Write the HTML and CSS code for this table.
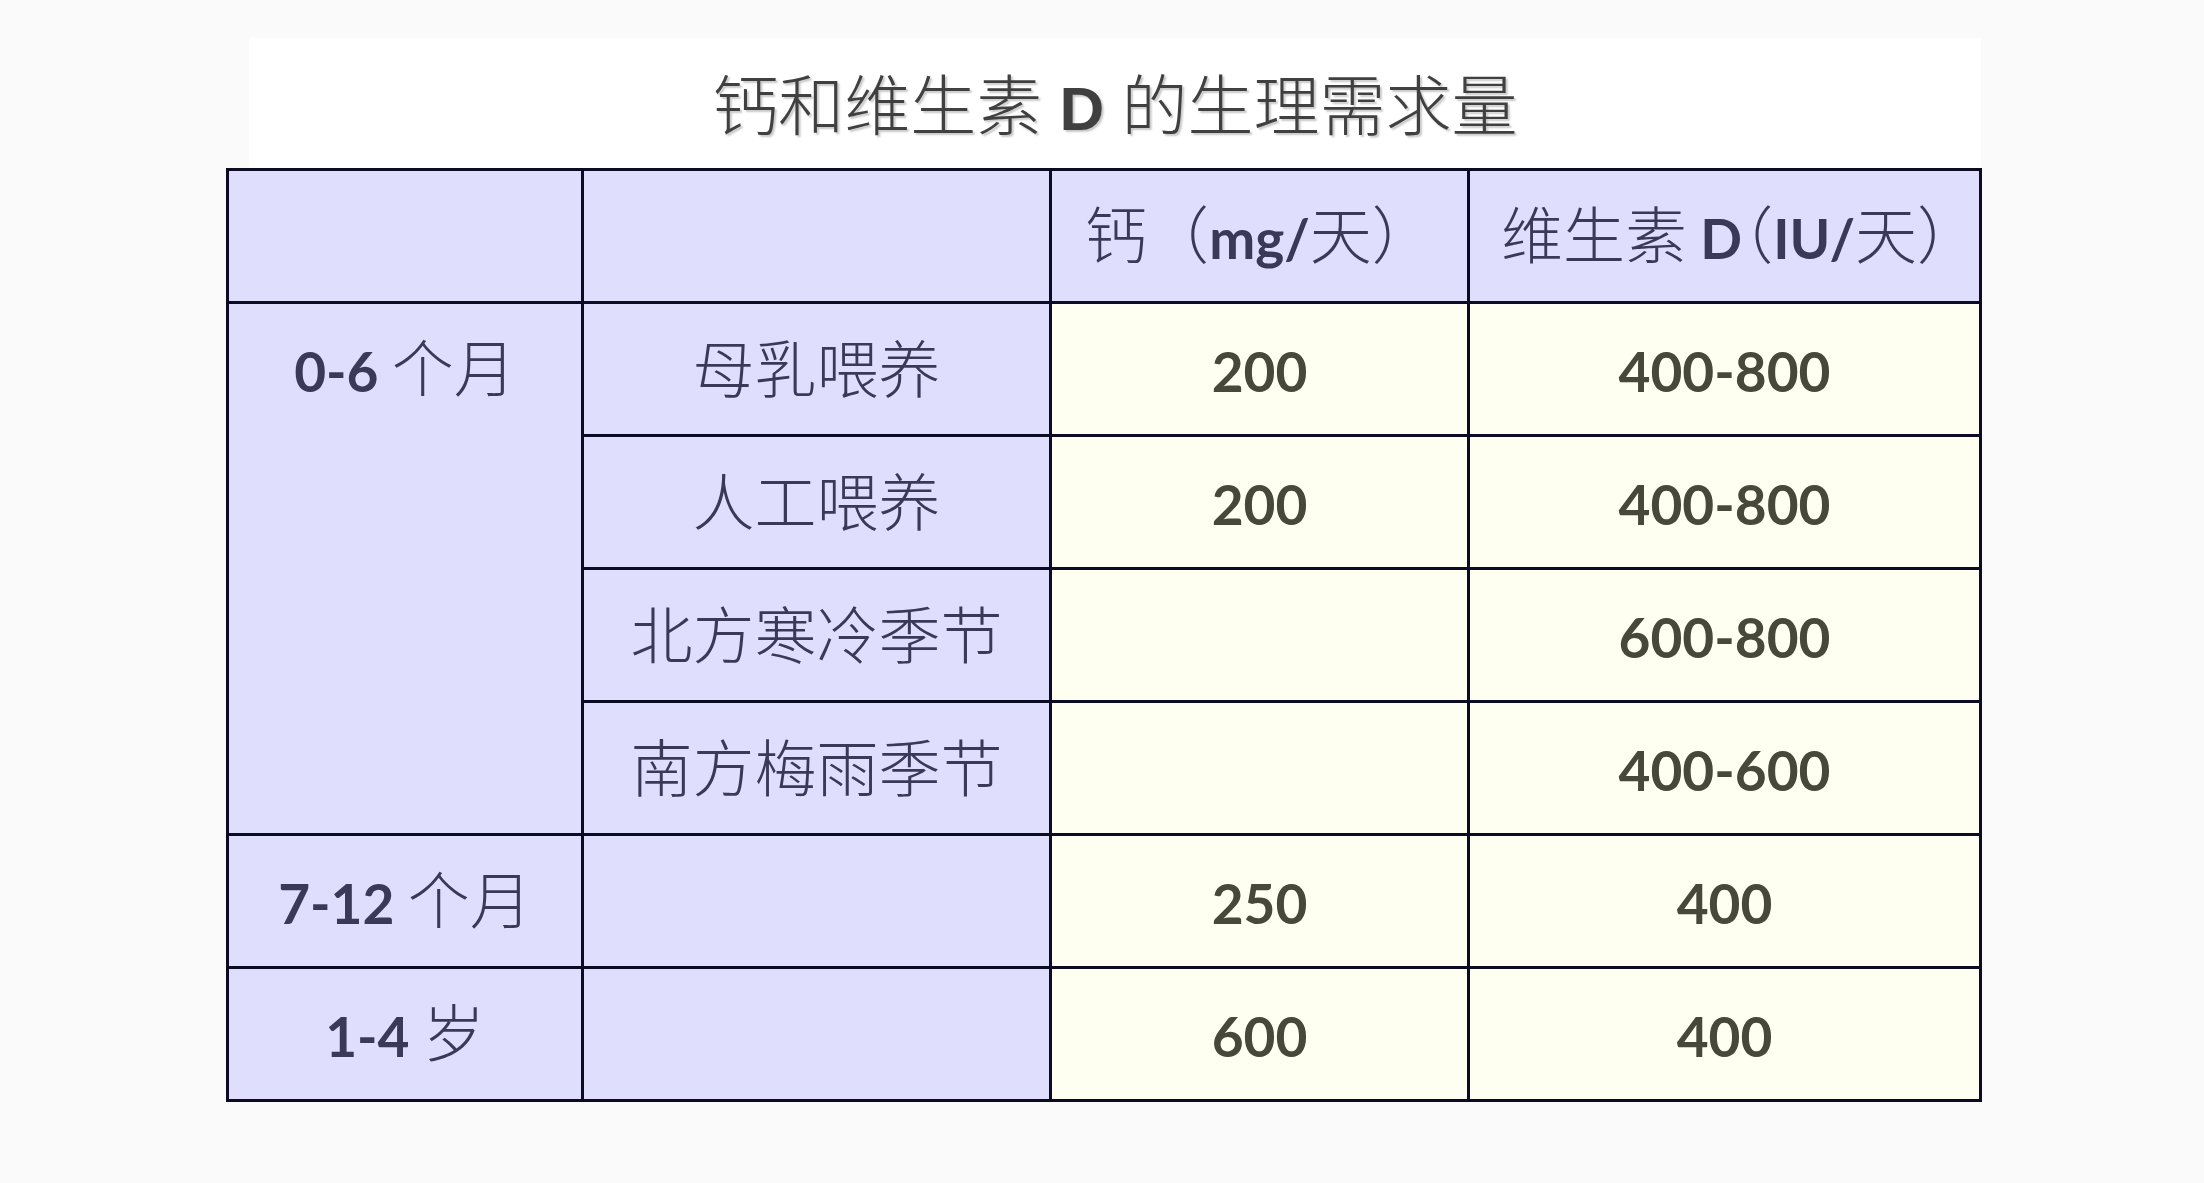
FILE: index.html
```html
<!DOCTYPE html>
<html lang="zh-CN">
<head>
<meta charset="utf-8">
<title>钙和维生素D的生理需求量</title>
<link rel="stylesheet" href="styles.css">
</head>
<body>
<div class="page">
  <div class="title-box">
    <h1 class="title">钙和维生素<span class="lat-t"> D </span>的生理需求量</h1>
  </div>
  <table class="needs">
    <colgroup>
      <col class="c1"><col class="c2"><col class="c3"><col class="c4">
    </colgroup>
    <thead>
      <tr>
        <th class="hd"></th>
        <th class="hd"></th>
        <th class="hd">钙（<span class="lat">mg/</span>天）</th>
        <th class="hd">维生素<span class="lat"> D</span><span class="tight">（</span><span class="lat">IU/</span>天<span class="tight">）</span></th>
      </tr>
    </thead>
    <tbody>
      <tr>
        <td class="hd age" rowspan="4"><div class="age-in"><span><span class="lat">0-6 </span>个月</span></div></td>
        <td class="hd">母乳喂养</td>
        <td class="val"><span class="num">200</span></td>
        <td class="val"><span class="num">400-800</span></td>
      </tr>
      <tr>
        <td class="hd">人工喂养</td>
        <td class="val"><span class="num">200</span></td>
        <td class="val"><span class="num">400-800</span></td>
      </tr>
      <tr>
        <td class="hd">北方寒冷季节</td>
        <td class="val"></td>
        <td class="val"><span class="num">600-800</span></td>
      </tr>
      <tr>
        <td class="hd">南方梅雨季节</td>
        <td class="val"></td>
        <td class="val"><span class="num">400-600</span></td>
      </tr>
      <tr>
        <td class="hd"><span class="lat">7-12 </span>个月</td>
        <td class="hd"></td>
        <td class="val"><span class="num">250</span></td>
        <td class="val"><span class="num">400</span></td>
      </tr>
      <tr>
        <td class="hd"><span class="lat">1-4 </span>岁</td>
        <td class="hd"></td>
        <td class="val"><span class="num">600</span></td>
        <td class="val"><span class="num">400</span></td>
      </tr>
    </tbody>
  </table>
</div>
</body>
</html>
```

FILE: styles.css
```css
html, body {
  margin: 0;
  padding: 0;
  background: #fafafa;
}

.page {
  padding: 38px 0 0 226px;
  width: 1760px;
}

.title-box {
  margin-left: 23px;
  width: 1732px;
  height: 130px;
  background: #ffffff;
  display: flex;
  align-items: center;
  justify-content: center;
}

.title {
  margin: 0;
  font-family: "Noto Sans CJK SC", sans-serif;
  font-weight: 300;
  font-size: 66px;
  line-height: 1;
  color: #404040;
  text-shadow: 2px 2px 2px rgba(0, 0, 0, 0.22);
  padding-top: 2px;
}

.lat-t {
  font-family: "Liberation Sans", Arial, sans-serif;
  font-weight: 700;
  font-size: 62px;
}

.needs {
  border-collapse: collapse;
  table-layout: fixed;
  width: 1756px;
  font-family: "Noto Sans CJK SC", sans-serif;
  font-weight: 300;
  font-size: 62px;
}

.c1 { width: 355px; }
.c2 { width: 468px; }
.c3 { width: 418px; }
.c4 { width: 512px; }

.needs th,
.needs td {
  border: 3px solid #0b0b24;
  height: 124px;
  padding: 0 0 6px 0;
  text-align: center;
  vertical-align: middle;
  line-height: 1.2;
  white-space: nowrap;
  font-weight: 300;
}

.hd {
  background: #dfdffd;
  color: #3a3a58;
}

.val {
  background: #fffff1;
  color: #48483a;
}

.age {
  vertical-align: top !important;
}

.age-in {
  height: 124px;
  display: flex;
  align-items: center;
  justify-content: center;
}

.tight {
  font-feature-settings: "halt" 1;
}

.lat,
.num {
  font-family: "Lato", "Carlito", "Liberation Sans", sans-serif;
  font-weight: 700;
  font-size: 55px;
}
```
